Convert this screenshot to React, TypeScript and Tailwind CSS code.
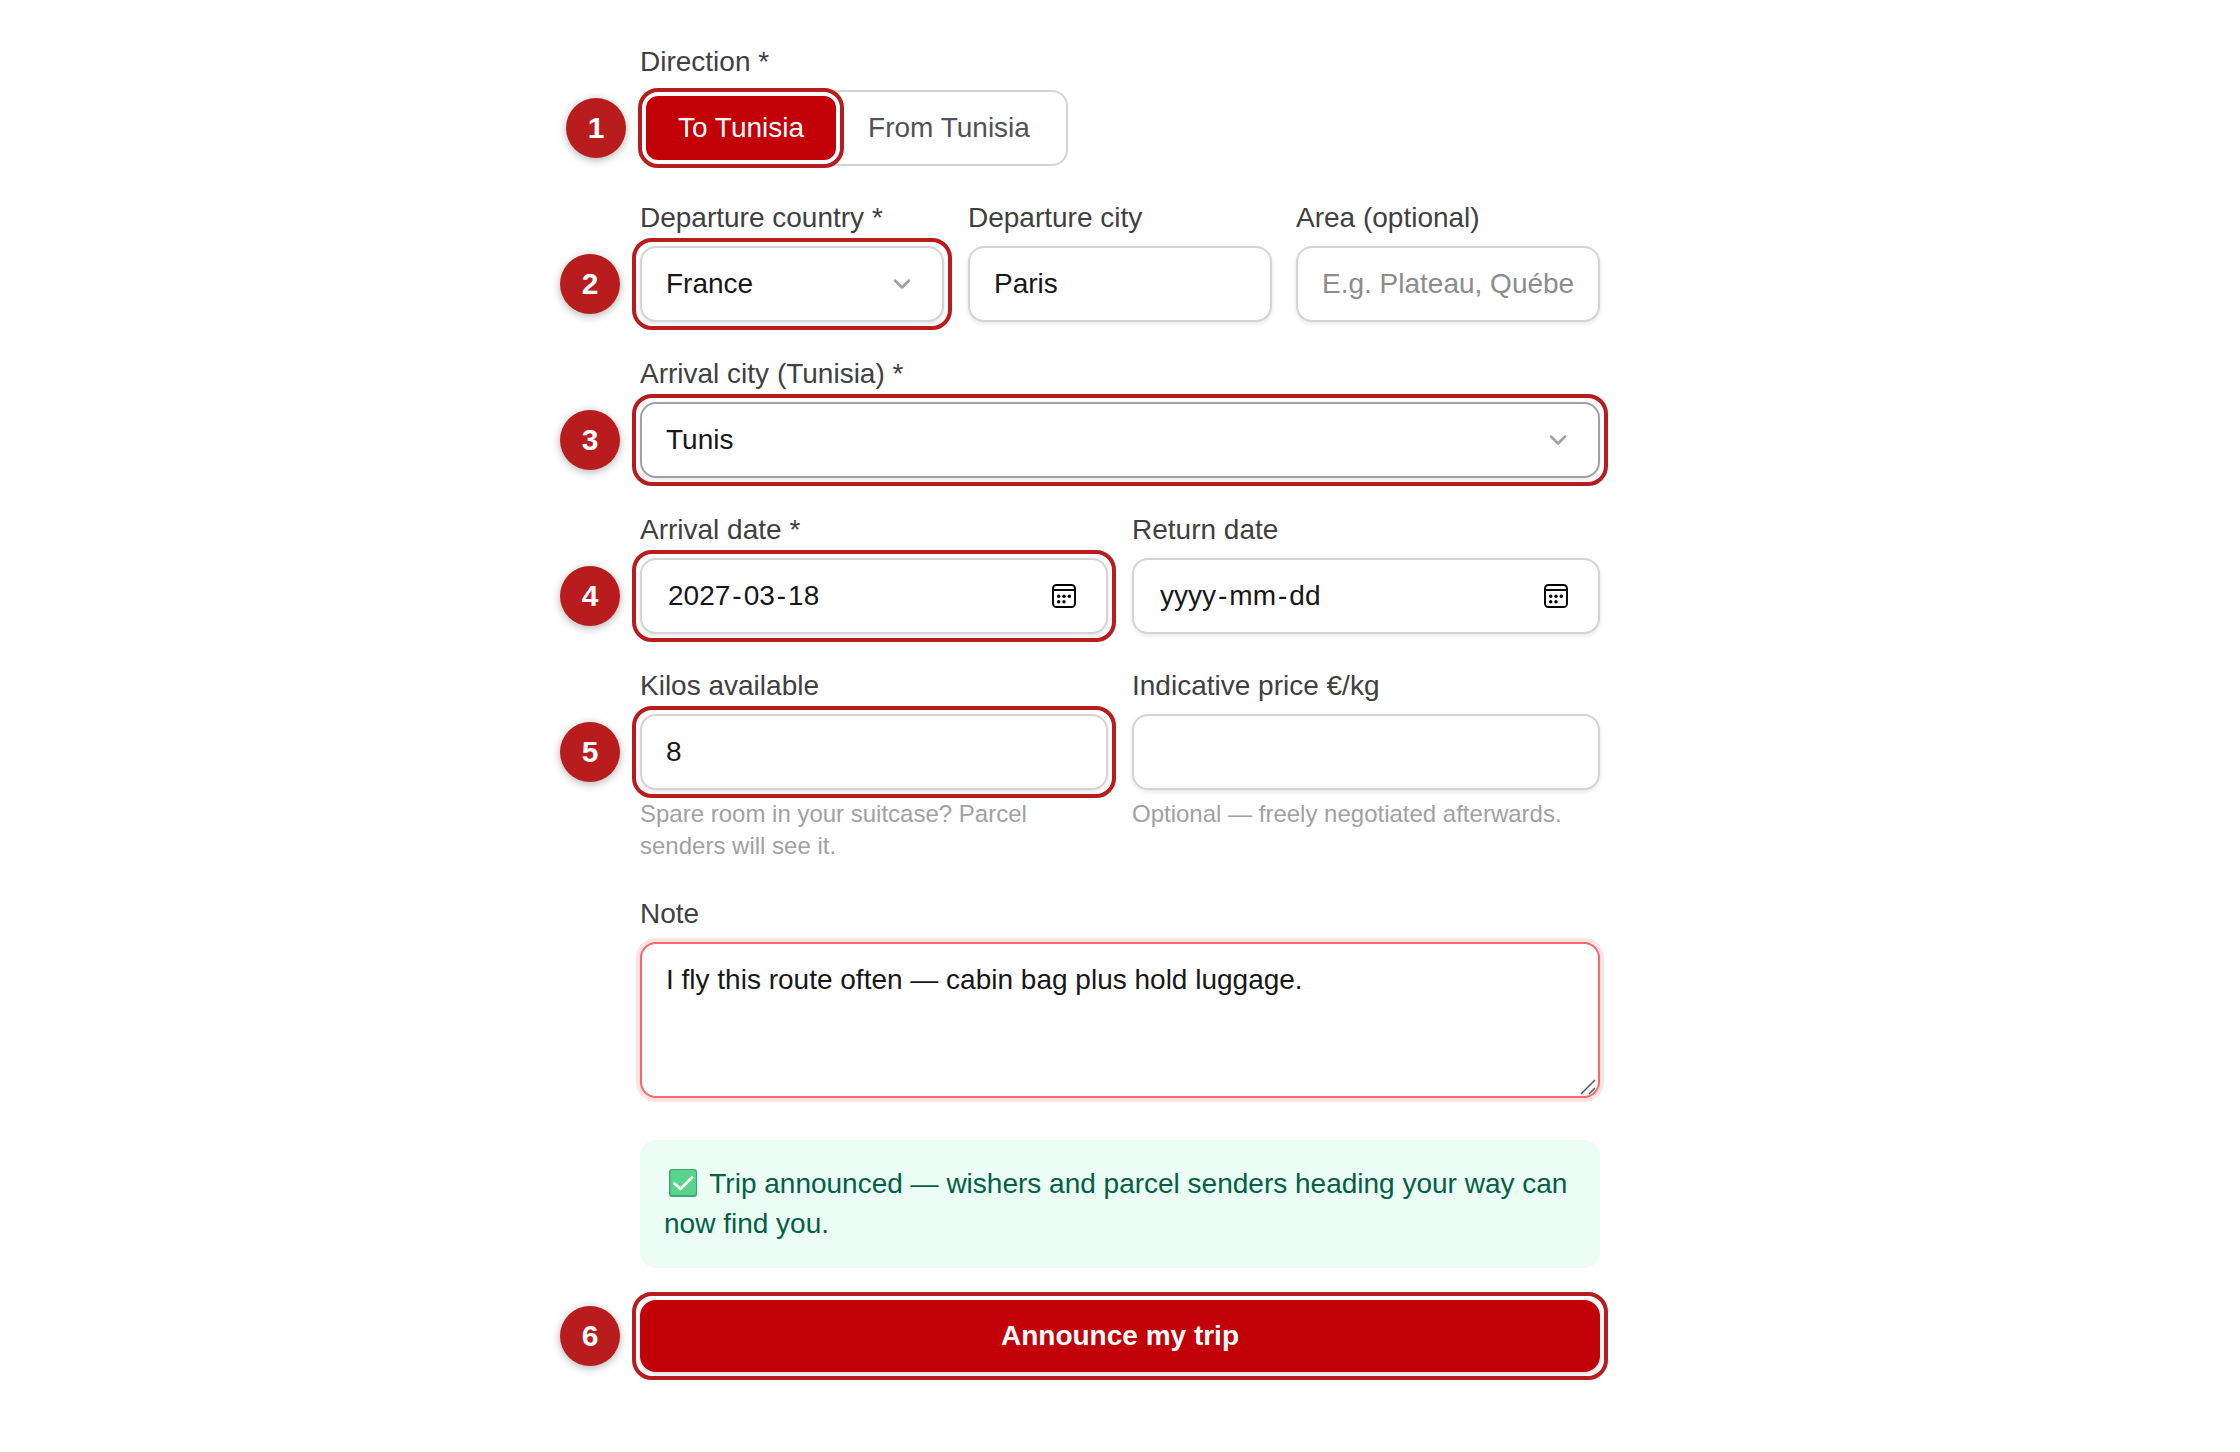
import { useState, type ReactNode } from "react";

const control =
  "block w-full rounded-[16px] border-2 border-neutral-300 bg-white px-6 py-4 text-[28px] leading-[40px] text-neutral-900 shadow-[0_2px_4px_rgba(0,0,0,0.1)] outline-none placeholder:text-[#8c8c8c]";
const labelText = "block text-[28px] leading-[40px] text-neutral-700";

/* Numbered badge plus the frame drawn round the control that it points to. */
function Step({ n }: { n: number }) {
  return (
    <>
      <span className="pointer-events-none absolute -inset-2 z-10 rounded-[20px] border-4 border-[#b91c1c]" />
      <span className="absolute top-1/2 right-full mr-5 flex size-[60px] -translate-y-1/2 items-center justify-center rounded-full bg-[#b91c1c] text-[30px] leading-none font-bold text-white shadow-[0_2px_8px_rgba(0,0,0,0.3)]">
        {n}
      </span>
    </>
  );
}

function Field({
  id,
  label,
  hint,
  step,
  children,
}: {
  id: string;
  label: string;
  hint?: string;
  step?: number;
  children: ReactNode;
}) {
  return (
    <div className="flex min-w-0 flex-col gap-2">
      <label htmlFor={id} className={labelText}>
        {label}
      </label>
      <div className="relative">
        {step && <Step n={step} />}
        {children}
      </div>
      {hint && <p className="text-[24px] leading-[32px] text-neutral-400">{hint}</p>}
    </div>
  );
}

function Chevron() {
  return (
    <svg
      viewBox="0 0 24 24"
      className="pointer-events-none absolute top-1/2 right-7 size-7 -translate-y-1/2 text-neutral-400"
      fill="none"
      stroke="currentColor"
      strokeWidth="2.2"
      strokeLinecap="round"
      strokeLinejoin="round"
      aria-hidden="true"
    >
      <path d="M6 9l6 6 6-6" />
    </svg>
  );
}

function CalendarIcon() {
  return (
    <svg viewBox="0 0 24 24" className="size-6" fill="none" stroke="black" strokeWidth="1.9" aria-hidden="true">
      <rect x="1" y="1" width="22" height="22" rx="3.5" />
      <path d="M1 6h22" />
      <g fill="black" stroke="none">
        <circle cx="6.7" cy="12.3" r="1.7" />
        <circle cx="12" cy="12.3" r="1.7" />
        <circle cx="17.3" cy="12.3" r="1.7" />
        <circle cx="6.7" cy="17.7" r="1.7" />
        <circle cx="12" cy="17.7" r="1.7" />
      </g>
    </svg>
  );
}

const segment =
  "field-sizing-content px-[2px] text-neutral-900 outline-none placeholder:text-neutral-900";

function DateControl({ id, name, value = ["", "", ""] }: { id: string; name: string; value?: string[] }) {
  return (
    <div role="group" aria-label={name} className={control}>
      <div className="flex items-center">
        <input id={id} className={segment} placeholder="yyyy" defaultValue={value[0]} maxLength={4} />
        <span>-</span>
        <input aria-label={`${name} month`} className={segment} placeholder="mm" defaultValue={value[1]} maxLength={2} />
        <span>-</span>
        <input aria-label={`${name} day`} className={segment} placeholder="dd" defaultValue={value[2]} maxLength={2} />
        <button type="button" aria-label={`Open ${name} calendar`} className="mr-[6px] ml-auto">
          <CalendarIcon />
        </button>
      </div>
    </div>
  );
}

export default function App() {
  const [direction, setDirection] = useState("to");
  const active = "bg-red-700 text-white";
  const idle = "text-neutral-600";
  return (
    <main className="min-h-screen bg-white px-24 pt-[42px] pb-[80px] font-['Liberation_Sans',Arial,sans-serif]">
      <form className="mx-auto flex w-full max-w-[960px] flex-col gap-8" onSubmit={(e) => e.preventDefault()}>
        <div className="flex flex-col gap-2">
          <span id="direction" className={labelText}>
            Direction *
          </span>
          <div
            role="group"
            aria-labelledby="direction"
            className="flex self-start rounded-[16px] border-2 border-neutral-300 bg-white p-1 text-[28px] leading-[40px]"
          >
            <div className="relative">
              <Step n={1} />
              <button
                type="button"
                onClick={() => setDirection("to")}
                className={`block rounded-[12px] px-8 py-3 ${direction === "to" ? active : idle}`}
              >
                To Tunisia
              </button>
            </div>
            <button
              type="button"
              onClick={() => setDirection("from")}
              className={`block rounded-[12px] px-8 py-3 ${direction === "from" ? active : idle}`}
            >
              From Tunisia
            </button>
          </div>
        </div>

        <div className="grid grid-cols-3 gap-6">
          <Field id="country" label="Departure country *" step={2}>
            <select id="country" defaultValue="France" className={`${control} appearance-none`}>
              <option>France</option>
              <option>Canada</option>
            </select>
            <Chevron />
          </Field>
          <Field id="city" label="Departure city">
            <input id="city" defaultValue="Paris" className={control} />
          </Field>
          <Field id="area" label="Area (optional)">
            <input id="area" placeholder="E.g. Plateau, Québec" className={control} />
          </Field>
        </div>

        <Field id="arrival" label="Arrival city (Tunisia) *" step={3}>
          <select id="arrival" defaultValue="Tunis" className={`${control} appearance-none border-neutral-400!`}>
            <option>Tunis</option>
            <option>Sfax</option>
          </select>
          <Chevron />
        </Field>

        <div className="grid grid-cols-2 gap-6">
          <Field id="arrival-date" label="Arrival date *" step={4}>
            <DateControl id="arrival-date" name="Arrival date" value={["2027", "03", "18"]} />
          </Field>
          <Field id="return-date" label="Return date">
            <DateControl id="return-date" name="Return date" />
          </Field>
        </div>

        <div className="grid grid-cols-2 gap-6">
          <Field
            id="kilos"
            label="Kilos available"
            step={5}
            hint="Spare room in your suitcase? Parcel senders will see it."
          >
            <input id="kilos" inputMode="decimal" defaultValue="8" className={control} />
          </Field>
          <Field id="price" label="Indicative price €/kg" hint="Optional — freely negotiated afterwards.">
            <input id="price" inputMode="decimal" className={control} />
          </Field>
        </div>

        <Field id="note" label="Note">
          <textarea
            id="note"
            rows={3}
            defaultValue="I fly this route often — cabin bag plus hold luggage."
            className={`${control} resize-none border-[#f4696d]! shadow-[0_0_0_4px_#ffe2e2]!`}
          />
          <svg
            viewBox="0 0 16 16"
            className="pointer-events-none absolute right-1 bottom-[3px] size-4"
            stroke="#555555"
            strokeWidth="1.5"
            aria-hidden="true"
          >
            <path d="M1 15L15 1M9 15l6-6" />
          </svg>
        </Field>

        <p
          role="status"
          className="mt-[10px] rounded-[16px] bg-emerald-50 p-6 text-[28px] leading-[40px] text-emerald-800"
        >
          <svg viewBox="0 0 28 28" className="mx-[5px] inline size-7 align-[-4px]" role="img" aria-label="Done">
            <rect width="28" height="28" rx="3" fill="#3fa872" />
            <rect x="1.5" y="1" width="25.5" height="25" rx="2.5" fill="#59d48d" />
            <path
              d="M5.5 14.5l6 5.500 11.500-11.500"
              fill="none"
              stroke="white"
              strokeWidth="2.6"
              strokeLinecap="round"
              strokeLinejoin="round"
            />
          </svg>{" "}
          Trip announced — wishers and parcel senders heading your way can now find you.
        </p>

        <div className="relative">
          <Step n={6} />
          <button
            type="submit"
            className="block w-full rounded-[16px] bg-red-700 py-4 text-[28px] leading-[40px] font-bold text-white shadow-[0_2px_4px_rgba(0,0,0,0.15)]"
          >
            Announce my trip
          </button>
        </div>
      </form>
    </main>
  );
}
